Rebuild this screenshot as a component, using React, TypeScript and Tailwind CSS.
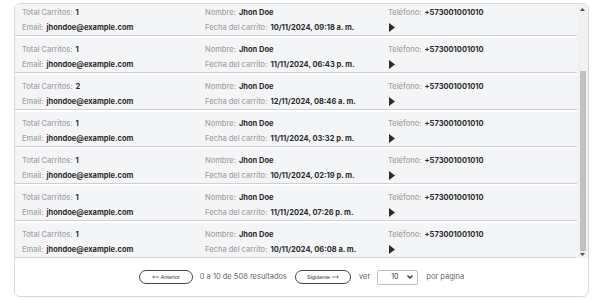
import React, { useEffect, useRef } from "react";

type Row = { total: number; fecha: string };

const rows: Row[] = [
  { total: 1, fecha: "09/11/2024, 05:12 p. m." },
  { total: 3, fecha: "09/11/2024, 11:40 a. m." },
  { total: 1, fecha: "10/11/2024, 09:18 a. m." },
  { total: 1, fecha: "11/11/2024, 06:43 p. m." },
  { total: 2, fecha: "12/11/2024, 08:46 a. m." },
  { total: 1, fecha: "11/11/2024, 03:32 p. m." },
  { total: 1, fecha: "10/11/2024, 02:19 p. m." },
  { total: 1, fecha: "11/11/2024, 07:26 p. m." },
  { total: 1, fecha: "10/11/2024, 06:08 a. m." },
];

const font = { fontFamily: "Inter, 'Noto Sans', sans-serif" };

function Field({ label, value }: { label: string; value: string }) {
  return (
    <div className="h-[15px] flex items-center whitespace-nowrap text-[7.5px]">
      <span className="text-[#a3a3a3] font-medium">{label}:</span>
      <span className="ml-[3px] text-[#2b2b2b] font-bold">{value}</span>
    </div>
  );
}

function Arrow({ dir }: { dir: "l" | "r" }) {
  return (
    <svg width="7" height="4" viewBox="0 0 7 4" className="shrink-0">
      {dir === "l" ? (
        <path d="M7 2H0.8M2 0.8L0.6 2L2 3.2" fill="none" stroke="#333" strokeWidth="0.6" />
      ) : (
        <path d="M0 2H6.2M5 0.8L6.4 2L5 3.2" fill="none" stroke="#333" strokeWidth="0.6" />
      )}
    </svg>
  );
}

export default function App() {
  const ref = useRef<HTMLDivElement>(null);
  useEffect(() => {
    if (ref.current) ref.current.scrollTop = ref.current.scrollHeight;
  }, []);
  return (
    <div className="w-[600px] h-[300px] bg-white pt-[3px] pl-[14px]" style={font}>
      <div className="w-[575px] h-[294px] border border-[#d8d8d8] rounded-[6px] flex flex-col overflow-hidden">
        <div className="h-[254px] flex shrink-0">
          <div
            ref={ref}
            className="flex-1 overflow-y-scroll [scrollbar-width:none]"
          >
            {rows.map((r, i) => (
              <div
                key={i}
                className="mt-[2px] h-[35px] bg-[#f4f5f7] border-b border-[#cdd0d4] pt-[4px] pl-[7px] grid grid-cols-[183px_183px_183px]"
              >
                <div>
                  <Field label="Total Carritos" value={String(r.total)} />
                  <Field label="Email" value="jhondoe@example.com" />
                </div>
                <div>
                  <Field label="Nombre" value="Jhon Doe" />
                  <Field label="Fecha del carrito" value={r.fecha} />
                </div>
                <div>
                  <Field label="Teléfono" value="+573001001010" />
                  <div className="h-[15px] flex items-center pl-[1px]">
                    <svg width="6" height="9" viewBox="0 0 6 9">
                      <polygon points="0,0 6,4.5 0,9" fill="#2b2b2b" />
                    </svg>
                  </div>
                </div>
              </div>
            ))}
          </div>
          <div className="w-[11px] bg-[#f1f1f1] flex flex-col items-center">
            <div className="h-[10px] flex items-center justify-center">
              <svg width="5" height="3" viewBox="0 0 5 3">
                <polygon points="0,3 2.5,0 5,3" fill="#505050" />
              </svg>
            </div>
            <div className="flex-1" />
            <div className="w-[6px] h-[180px] bg-[#c1c1c1]" />
            <div className="h-[7px] flex items-center justify-center">
              <svg width="5" height="3" viewBox="0 0 5 3">
                <polygon points="0,0 5,0 2.5,3" fill="#505050" />
              </svg>
            </div>
          </div>
        </div>
        <div className="flex-1 flex items-center justify-center text-[7.5px] text-[#666]">
          <button className="w-[54px] h-[14px] border border-[#444] rounded-full text-[5.5px] text-[#333] flex items-center justify-center gap-[2px]" style={{ fontFamily: "'Liberation Sans', sans-serif" }}>
            <Arrow dir="l" />
            <span>Anterior</span>
          </button>
          <span className="ml-[7px]">0 a 10 de 508 resultados</span>
          <button className="ml-[8px] w-[56px] h-[14px] border border-[#444] rounded-full text-[5.5px] text-[#333] flex items-center justify-center gap-[2px]" style={{ fontFamily: "'Liberation Sans', sans-serif" }}>
            <span>Siguiente</span>
            <Arrow dir="r" />
          </button>
          <span className="ml-[8px]">ver</span>
          <div className="ml-[7px] w-[41px] h-[15px] border border-[#bdbdbd] rounded-[2px] flex items-center text-[#333] text-[7px]">
            <span className="flex-1 text-center pl-[4px]">10</span>
            <svg className="mr-[4px]" width="6" height="4" viewBox="0 0 6 4">
              <polyline points="0.5,0.5 3,3 5.5,0.5" fill="none" stroke="#333" strokeWidth="1.4" />
            </svg>
          </div>
          <span className="ml-[8px]">por página</span>
        </div>
      </div>
    </div>
  );
}
